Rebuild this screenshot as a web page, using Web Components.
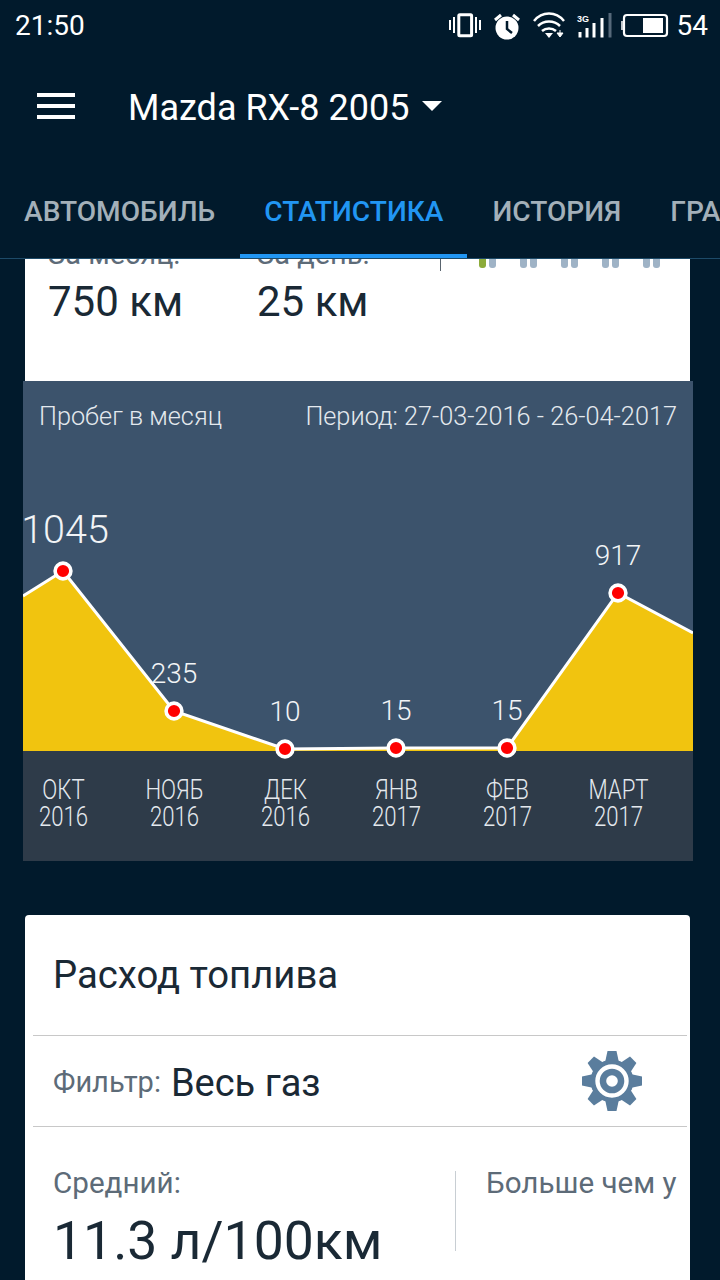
<!DOCTYPE html>
<html lang="ru">
<head>
<meta charset="utf-8">
<title>Статистика</title>
<style>
  html, body { margin: 0; padding: 0; background: #011a2c; }
  body { width: 720px; height: 1280px; overflow: hidden; font-family: Roboto, "Liberation Sans", sans-serif; }
  main { display: block; height: 1021px; overflow: hidden; }
</style>
</head>
<body>
<status-bar></status-bar>
<app-toolbar>Mazda RX-8 2005</app-toolbar>
<tab-strip>
  <tab-item>АВТОМОБИЛЬ</tab-item>
  <tab-item active>СТАТИСТИКА</tab-item>
  <tab-item>ИСТОРИЯ</tab-item>
  <tab-item>ГРАФИК</tab-item>
</tab-strip>
<main>
  <stat-card></stat-card>
  <mileage-chart></mileage-chart>
  <fuel-card></fuel-card>
</main>
<script>
class StatusBar extends HTMLElement {
  connectedCallback() {
    this.attachShadow({ mode: 'open' });
    this.shadowRoot.innerHTML = `
      <style>
        :host { display: flex; align-items: center; height: 50px; padding: 0 12px 0 15px; color: #fff; font-size: 28px; }
        .time { flex: 1; }
        .icons { display: flex; align-items: center; }
        svg { display: block; }
        .net { font-size: 9px; font-family: "Liberation Sans", sans-serif; font-weight: 700; }
        .pct { margin-left: 8px; }
      </style>
      <span class="time">21:50</span>
      <div class="icons">
        <svg width="220" height="40" viewBox="449 5 220 40" fill="none">
          <!-- vibrate -->
          <rect x="458.800" y="14.800" width="12.800" height="21" rx="1" stroke="#fff" stroke-width="3"/>
          <path d="M450 20v10M454 17v16M476 17v16M480 20v10" stroke="#fff" stroke-width="2"/>
          <!-- alarm -->
          <circle cx="507" cy="28" r="11.500" fill="#fff"/>
          <path d="M507 21v8l5 4" stroke="#011a2c" stroke-width="2.500"/>
          <path d="M495 20l6-5M513 15l6 5" stroke="#fff" stroke-width="3"/>
          <!-- wifi -->
          <path d="M534 21c8-10 22-10 30 0M538 26c6-6 16-6 22 0M542 31c4-3.500 10-3.500 14 0" stroke="#fff" stroke-width="2.500"/>
          <path d="M545 33h8l-4 5z" fill="#fff"/>
          <path d="M560 30v4M557 33h6l-3 4z" fill="#fff" stroke="#fff" stroke-width="1"/>
          <!-- signal -->
          <text class="net" x="577" y="22" fill="#fff">3G</text>
          <path d="M580 32v5.500M587 28v9.500M594 23v14.500M602 18v19.500" stroke="#fff" stroke-width="3"/>
          <path d="M610 13v24.500" stroke="#56697a" stroke-width="3"/>
          <!-- battery -->
          <rect x="624" y="15" width="43" height="21" rx="3" stroke="#fff" stroke-width="2.200"/>
          <path d="M622 21v9" stroke="#fff" stroke-width="1.500"/>
          <rect x="643" y="18" width="20" height="15" fill="#fff"/>
        </svg>
        <span class="pct">54</span>
      </div>`;
  }
}

class AppToolbar extends HTMLElement {
  connectedCallback() {
    this.attachShadow({ mode: 'open' });
    this.shadowRoot.innerHTML = `
      <style>
        :host { display: flex; align-items: center; height: 115px; padding: 0 0 0 37px; color: #fff; font-size: 36px; }
        .menu { display: flex; flex-direction: column; gap: 7px; width: 38px; margin: 0 53px 4px 0; }
        .menu i { display: block; height: 4px; background: #fff; }
        .caret { width: 0; height: 0; margin: 0 0 4px 13px; border: 10px solid transparent; border-top-color: #fff; border-bottom-width: 0; }
      </style>
      <div class="menu"><i></i><i></i><i></i></div>
      <slot></slot>
      <div class="caret"></div>`;
  }
}

class TabStrip extends HTMLElement {
  connectedCallback() {
    this.attachShadow({ mode: 'open' });
    this.shadowRoot.innerHTML = `
      <style>
        :host { display: flex; height: 93px; border-bottom: 1px solid #1d4a68; overflow: hidden; }
      </style>
      <slot></slot>`;
  }
}

class TabItem extends HTMLElement {
  connectedCallback() {
    this.attachShadow({ mode: 'open' });
    this.shadowRoot.innerHTML = `
      <style>
        :host { display: block; flex: none; box-sizing: border-box; height: 93px; padding: 29px 24px 0; margin-right: 1px; font-size: 28.100px; font-weight: 500; line-height: 36px; color: #a3b0b9; white-space: nowrap; }
        :host([active]) { color: #2196f3; border-bottom: 4px solid #2196f3; }
      </style>
      <slot></slot>`;
  }
}

class StatCard extends HTMLElement {
  connectedCallback() {
    this.attachShadow({ mode: 'open' });
    const bars = [0, 1, 2, 3, 4].map(i => `<span class="pair${i === 0 ? ' on' : ''}"><i></i><i></i></span>`).join('');
    this.shadowRoot.innerHTML = `
      <style>
        :host { display: block; height: 122px; margin: 0 30px 0 25px; background: #fff; overflow: hidden; color: #1a2935; }
        .row { display: flex; margin-top: -23px; }
        .col { padding-left: 23px; width: 186px; }
        .col + .col { width: 159px; }
        .lbl { font-size: 29px; line-height: 36px; color: #5d6b78; white-space: nowrap; }
        .val { font-size: 42px; line-height: 48px; margin-top: 6px; white-space: nowrap; }
        .side { border-left: 1px solid #59646e; height: 35px; margin-left: 24px; padding-left: 38px; display: flex; gap: 24px; }
        .pair { display: flex; gap: 3px; height: 32px; }
        .pair i { display: block; width: 7px; border-radius: 3px; background: #9fb3c6; }
        .on i:first-child { background: #8cab3a; }
      </style>
      <div class="row">
        <div class="col"><div class="lbl">За месяц:</div><div class="val">750 км</div></div>
        <div class="col"><div class="lbl">За день:</div><div class="val">25 км</div></div>
        <div class="side">${bars}</div>
      </div>`;
  }
}

class MileageChart extends HTMLElement {
  connectedCallback() {
    this.attachShadow({ mode: 'open' });
    const pts = [[40, 190], [151, 330], [262, 368], [373, 367], [484, 367], [595, 212]];
    const line = '0,215 ' + pts.map(p => p.join(',')).join(' ') + ' 670,252';
    const dots = pts.map(p => `<circle cx="${p[0]}" cy="${p[1]}" r="7.900" fill="#f00" stroke="#fff" stroke-width="3.600"/>`).join('');
    const vals = [[42, 162, 39.500, '1045'], [151, 302, 28, '235'], [262, 340, 28, '10'], [373, 339, 28, '15'], [484, 339, 28, '15'], [595, 184, 28, '917']];
    const labels = vals.map(v => `<text x="${v[0]}" y="${v[1]}" font-size="${v[2]}">${v[3]}</text>`).join('');
    const months = [['ОКТ', 2016], ['НОЯБ', 2016], ['ДЕК', 2016], ['ЯНВ', 2017], ['ФЕВ', 2017], ['МАРТ', 2017]];
    this.shadowRoot.innerHTML = `
      <style>
        :host { display: block; position: relative; width: 670px; margin-left: 23px; background: #3c536c; color: #e4e9ee; overflow: hidden; }
        .head { position: absolute; top: 20px; left: 16px; right: 16px; display: flex; justify-content: space-between; font-size: 25.300px; line-height: 32px; font-weight: 300; }
        svg { display: block; position: relative; z-index: 1; overflow: visible; }
        text { fill: #f2f4f6; font-weight: 300; text-anchor: middle; font-family: Roboto, sans-serif; }
        .axis { display: grid; grid-template-columns: repeat(6, 111px); margin-left: -15.500px; height: 110px; background: #2e3b49; padding-top: 26px; box-sizing: border-box; font-size: 27px; line-height: 27px; font-weight: 300; text-align: center; }
        .axis span { display: block; transform: scaleX(.82); }
      </style>
      <div class="head"><span>Пробег в месяц</span><span>Период: 27-03-2016 - 26-04-2017</span></div>
      <svg width="670" height="370" viewBox="0 0 670 370">
        <polygon points="0,370 ${line} 670,370" fill="#f1c40f"/>
        <polyline points="${line}" fill="none" stroke="#fff" stroke-width="3"/>
        ${dots}
        ${labels}
      </svg>
      <div class="axis">${months.map(m => `<span>${m[0]}<br>${m[1]}</span>`).join('')}</div>`;
  }
}

class FuelCard extends HTMLElement {
  connectedCallback() {
    this.attachShadow({ mode: 'open' });
    const teeth = [0, 45, 90, 135, 180, 225, 270, 315].map(a => `<path d="M-4.500 -30h9l3 14h-15z" stroke-linejoin="round" transform="rotate(${a})"/>`).join('');
    this.shadowRoot.innerHTML = `
      <style>
        :host { display: block; height: 400px; margin: 54px 30px 0 25px; background: #fff; border-radius: 4px 4px 0 0; color: #1a2935; }
        h2 { margin: 0; padding: 0 28px; height: 120px; box-sizing: border-box; font-size: 38.300px; font-weight: 400; line-height: 120px; }
        .filter { display: flex; align-items: center; height: 90px; margin: 0 3px 0 8px; padding-left: 20px; border-top: 1px solid #c8c8c8; border-bottom: 1px solid #c8c8c8; }
        .filter small { font-size: 29px; color: #5d6b78; padding-top: 2px; }
        .filter b { font-size: 38px; font-weight: 400; margin-left: 10px; flex: 1; padding-top: 3px; }
        .filter svg { margin-right: 45px; }
        .avg { display: flex; padding: 38px 0 0 28px; }
        .avg .main { width: 402px; height: 80px; border-right: 1px solid #c8ced3; flex: none; margin-top: 6px; }
        .lbl { font-size: 29.600px; line-height: 24px; color: #5d6b78; white-space: nowrap; }
        .big { font-size: 53.500px; line-height: 60px; margin-top: 16px; white-space: nowrap; }
        .more { padding: 6px 0 0 30px; white-space: nowrap; }
      </style>
      <h2>Расход топлива</h2>
      <div class="filter">
        <small>Фильтр:</small><b>Весь газ</b>
        <svg width="60" height="60" viewBox="-30 -30 60 60" fill="#5a7d9d">
          ${teeth}
          <circle r="21.500"/>
          <circle r="14.500" fill="none" stroke="#fff" stroke-width="4.400"/>
          <circle r="5.800" fill="#fff"/>
        </svg>
      </div>
      <div class="avg">
        <div class="main"><div class="lbl">Средний:</div><div class="big">11.3 л/100км</div></div>
        <div class="more lbl">Больше чем у</div>
      </div>`;
  }
}

customElements.define('status-bar', StatusBar);
customElements.define('app-toolbar', AppToolbar);
customElements.define('tab-strip', TabStrip);
customElements.define('tab-item', TabItem);
customElements.define('stat-card', StatCard);
customElements.define('mileage-chart', MileageChart);
customElements.define('fuel-card', FuelCard);
</script>
</body>
</html>
